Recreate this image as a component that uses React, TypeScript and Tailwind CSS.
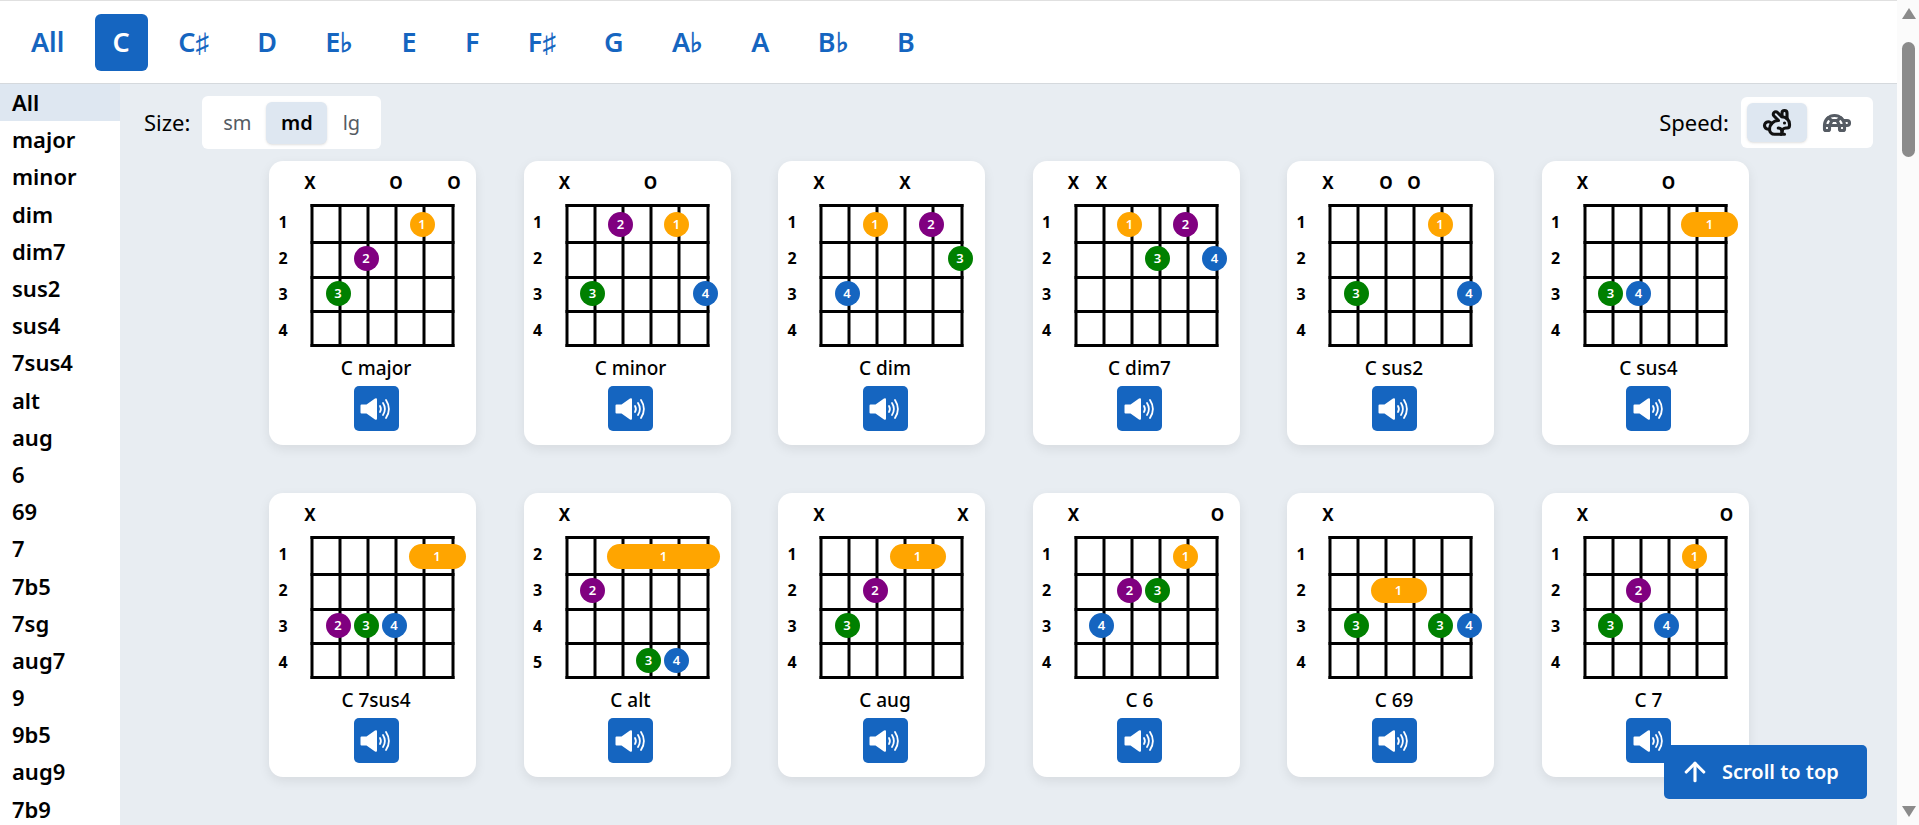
import { ArrowUp, Rabbit, Turtle } from "lucide-react";

type Dot = { finger: number; fret: number; string: number; end?: number };

type Chord = {
  name: string;
  frets: number[];
  marks: Record<number, string>;
  dots: Dot[];
};

const FONT = "font-['Noto_Sans','Open_Sans',sans-serif]";

const keys = ["All", "C", "C♯", "D", "E♭", "E", "F", "F♯", "G", "A♭", "A", "B♭", "B"];

const types = [
  "All", "major", "minor", "dim", "dim7", "sus2", "sus4", "7sus4", "alt", "aug",
  "6", "69", "7", "7b5", "7sg", "aug7", "9", "9b5", "aug9", "7b9",
];

const first = [1, 2, 3, 4];

const chords: Chord[] = [
  {
    name: "C major",
    frets: first,
    marks: { 1: "X", 4: "O", 6: "O" },
    dots: [
      { finger: 1, fret: 1, string: 5 },
      { finger: 2, fret: 2, string: 3 },
      { finger: 3, fret: 3, string: 2 },
    ],
  },
  {
    name: "C minor",
    frets: first,
    marks: { 1: "X", 4: "O" },
    dots: [
      { finger: 2, fret: 1, string: 3 },
      { finger: 1, fret: 1, string: 5 },
      { finger: 3, fret: 3, string: 2 },
      { finger: 4, fret: 3, string: 6 },
    ],
  },
  {
    name: "C dim",
    frets: first,
    marks: { 1: "X", 4: "X" },
    dots: [
      { finger: 1, fret: 1, string: 3 },
      { finger: 2, fret: 1, string: 5 },
      { finger: 3, fret: 2, string: 6 },
      { finger: 4, fret: 3, string: 2 },
    ],
  },
  {
    name: "C dim7",
    frets: first,
    marks: { 1: "X", 2: "X" },
    dots: [
      { finger: 1, fret: 1, string: 3 },
      { finger: 2, fret: 1, string: 5 },
      { finger: 3, fret: 2, string: 4 },
      { finger: 4, fret: 2, string: 6 },
    ],
  },
  {
    name: "C sus2",
    frets: first,
    marks: { 1: "X", 3: "O", 4: "O" },
    dots: [
      { finger: 1, fret: 1, string: 5 },
      { finger: 3, fret: 3, string: 2 },
      { finger: 4, fret: 3, string: 6 },
    ],
  },
  {
    name: "C sus4",
    frets: first,
    marks: { 1: "X", 4: "O" },
    dots: [
      { finger: 1, fret: 1, string: 5, end: 6 },
      { finger: 3, fret: 3, string: 2 },
      { finger: 4, fret: 3, string: 3 },
    ],
  },
  {
    name: "C 7sus4",
    frets: first,
    marks: { 1: "X" },
    dots: [
      { finger: 1, fret: 1, string: 5, end: 6 },
      { finger: 2, fret: 3, string: 2 },
      { finger: 3, fret: 3, string: 3 },
      { finger: 4, fret: 3, string: 4 },
    ],
  },
  {
    name: "C alt",
    frets: [2, 3, 4, 5],
    marks: { 1: "X" },
    dots: [
      { finger: 1, fret: 1, string: 3, end: 6 },
      { finger: 2, fret: 2, string: 2 },
      { finger: 3, fret: 4, string: 4 },
      { finger: 4, fret: 4, string: 5 },
    ],
  },
  {
    name: "C aug",
    frets: first,
    marks: { 1: "X", 6: "X" },
    dots: [
      { finger: 1, fret: 1, string: 4, end: 5 },
      { finger: 2, fret: 2, string: 3 },
      { finger: 3, fret: 3, string: 2 },
    ],
  },
  {
    name: "C 6",
    frets: first,
    marks: { 1: "X", 6: "O" },
    dots: [
      { finger: 1, fret: 1, string: 5 },
      { finger: 2, fret: 2, string: 3 },
      { finger: 3, fret: 2, string: 4 },
      { finger: 4, fret: 3, string: 2 },
    ],
  },
  {
    name: "C 69",
    frets: first,
    marks: { 1: "X" },
    dots: [
      { finger: 1, fret: 2, string: 3, end: 4 },
      { finger: 3, fret: 3, string: 2 },
      { finger: 3, fret: 3, string: 5 },
      { finger: 4, fret: 3, string: 6 },
    ],
  },
  {
    name: "C 7",
    frets: first,
    marks: { 1: "X", 6: "O" },
    dots: [
      { finger: 1, fret: 1, string: 5 },
      { finger: 2, fret: 2, string: 3 },
      { finger: 3, fret: 3, string: 2 },
      { finger: 4, fret: 3, string: 4 },
    ],
  },
];

const stringX = [43, 71, 99, 127, 155, 184];
const markX = [41, 69, 99, 127, 155, 185];
const fretY = [44.5, 81.5, 116.5, 150.5, 184.5];
const rowY = [63, 97, 132, 167];
const labelY = [61, 97, 133, 169];
const dotColors: Record<number, string> = {
  1: "bg-[#ffa500]",
  2: "bg-[#800080]",
  3: "bg-[#008000]",
  4: "bg-[#1565c0]",
};

const SpeakerIcon = () => (
  <svg width="32" height="24" viewBox="0 0 32 24" fill="none">
    <path d="M0.5 8.5 Q0.5 7.5 1.5 7.5 H6.5 L15 1.5 Q17 0.6 17 2.5 V21.5 Q17 23.4 15 22.5 L6.5 16.5 H1.5 Q0.5 16.5 0.5 15.5 Z" fill="white" />
    <path d="M20 9 Q21.8 12 20 15" stroke="white" strokeWidth="1.8" strokeLinecap="round" />
    <path d="M23 6 Q26.8 12 23 18" stroke="white" strokeWidth="1.8" strokeLinecap="round" />
    <path d="M26 3 Q31.8 12 26 21" stroke="white" strokeWidth="1.8" strokeLinecap="round" />
  </svg>
);

const ChordDiagram = ({ chord }: { chord: Chord }) => (
  <div className="relative w-[207px] h-[192px] shrink-0">
    <svg width="207" height="192" viewBox="0 0 207 192" className="block">
      {stringX.map((x) => (
        <line key={x} x1={x} x2={x} y1="43" y2="186" stroke="#000" strokeWidth="3" />
      ))}
      {fretY.map((y) => (
        <line key={y} x1="41.5" x2="185.5" y1={y} y2={y} stroke="#000" strokeWidth="3" />
      ))}
    </svg>
    {Object.entries(chord.marks).map(([string, mark]) => (
      <span
        key={string}
        className="absolute -translate-x-1/2 -translate-y-1/2 text-[17px] leading-none font-bold"
        style={{ left: markX[Number(string) - 1], top: 21 }}
      >
        {mark}
      </span>
    ))}
    {chord.frets.map((fret, i) => (
      <span
        key={fret}
        className="absolute -translate-x-1/2 -translate-y-1/2 text-[16px] leading-none font-bold"
        style={{ left: 14, top: labelY[i] }}
      >
        {fret}
      </span>
    ))}
    {chord.dots.map((dot, i) => {
      // barres run a little past the outer strings
      const left = stringX[dot.string - 1] - (dot.end ? 3 : 2);
      const right = stringX[(dot.end ?? dot.string) - 1] - (dot.end ? 0 : 2);
      return (
        <span
          key={i}
          className={`absolute h-[25px] rounded-full flex items-center justify-center text-white text-[13px] leading-none font-semibold ${dotColors[dot.finger]}`}
          style={{ left: left - 12.5, top: rowY[dot.fret - 1] - 12.5, width: right - left + 25 }}
        >
          {dot.finger}
        </span>
      );
    })}
  </div>
);

const ChordCard = ({ chord }: { chord: Chord }) => (
  <div className="w-[207px] h-[284px] bg-white rounded-[14px] shadow-[0_4px_12px_rgba(0,0,0,0.08)] flex flex-col items-center">
    <ChordDiagram chord={chord} />
    <div className="ml-[7px] mt-[4px] text-[19px] leading-[22px] font-medium text-black">{chord.name}</div>
    <button className="ml-[7px] mt-[7px] w-[45px] h-[45px] rounded-[5px] bg-[#1565c0] flex items-center justify-center">
      <SpeakerIcon />
    </button>
  </div>
);

const Scrollbar = () => (
  <div className="w-[22px] h-full bg-[#fbfbfb] pl-[5px] pr-[4px] flex flex-col items-center shrink-0">
    <div className="mt-[8px] w-0 h-0 border-x-[7px] border-x-transparent border-b-[11px] border-b-[#8b8b8b]" />
    <div className="mt-[23px] w-[13px] h-[115px] rounded-[7px] bg-[#8b8b8b]" />
    <div className="mt-auto mb-[8px] w-0 h-0 border-x-[7px] border-x-transparent border-t-[11px] border-t-[#8b8b8b]" />
  </div>
);

export default function App() {
  return (
    <div className={`h-[825px] w-full flex overflow-hidden bg-white text-black ${FONT}`}>
      <div className="flex-1 min-w-0 flex flex-col">
        <header className="h-[84px] shrink-0 border-t border-t-[#e0e0e0] border-b border-b-[#d5d9dd] bg-white flex items-center pl-[13px] gap-[12.5px]">
          {keys.map((key) => (
            <button
              key={key}
              className={`h-[57px] px-[17.9px] rounded-[6px] text-[27px] font-semibold flex items-center justify-center ${
                key === "C" ? "bg-[#1565c0] text-white" : "text-[#1565c0]"
              }`}
            >
              {key}
            </button>
          ))}
        </header>
        <div className="flex-1 min-h-0 flex">
          <aside className="w-[120px] shrink-0 bg-white overflow-hidden">
            {types.map((type) => (
              <div
                key={type}
                className={`h-[37.2px] pl-[12px] flex items-center text-[22px] font-semibold ${
                  type === "All" ? "bg-[#dee7f1]" : ""
                }`}
              >
                {type}
              </div>
            ))}
          </aside>
          <main className="relative flex-1 min-w-0 bg-[#e8edf2] overflow-hidden">
            <div className="flex items-center justify-between px-[24px] pt-[12px]">
              <div className="flex items-center gap-[12px]">
                <span className="text-[22px]">Size:</span>
                <div className="h-[53px] bg-white rounded-[6px] flex items-center px-[6px]">
                  <span className="w-[58px] h-[42px] flex items-center justify-center text-[20px] text-[#555b63]">sm</span>
                  <span className="w-[61px] h-[42px] rounded-[6px] bg-[#dee7f1] shadow-sm flex items-center justify-center text-[20px] font-semibold">md</span>
                  <span className="w-[48px] h-[42px] flex items-center justify-center text-[20px] text-[#555b63]">lg</span>
                </div>
              </div>
              <div className="flex items-center gap-[12px]">
                <span className="text-[22px]">Speed:</span>
                <div className="h-[51px] bg-white rounded-[6px] flex items-center px-[6px]">
                  <span className="w-[60px] h-[39px] rounded-[6px] bg-[#dee7f1] shadow-sm flex items-center justify-center text-[#111]">
                    <Rabbit size={30} strokeWidth={2.5} />
                  </span>
                  <span className="w-[60px] h-[39px] flex items-center justify-center text-[#555b63]">
                    <Turtle size={30} strokeWidth={2.5} />
                  </span>
                </div>
              </div>
            </div>
            <div className="mt-[12px] ml-[149px] w-[1479px] grid grid-cols-[repeat(6,207px)] gap-x-[47.5px] gap-y-[48px]">
              {chords.map((chord) => (
                <ChordCard key={chord.name} chord={chord} />
              ))}
            </div>
            <button className="absolute right-[30px] bottom-[26px] w-[203px] h-[54px] rounded-[5px] bg-[#1565c0] text-white text-[20px] font-semibold flex items-center pl-[16px] gap-[12px]">
              <ArrowUp size={30} strokeWidth={2.5} />
              Scroll to top
            </button>
          </main>
        </div>
      </div>
      <Scrollbar />
    </div>
  );
}
